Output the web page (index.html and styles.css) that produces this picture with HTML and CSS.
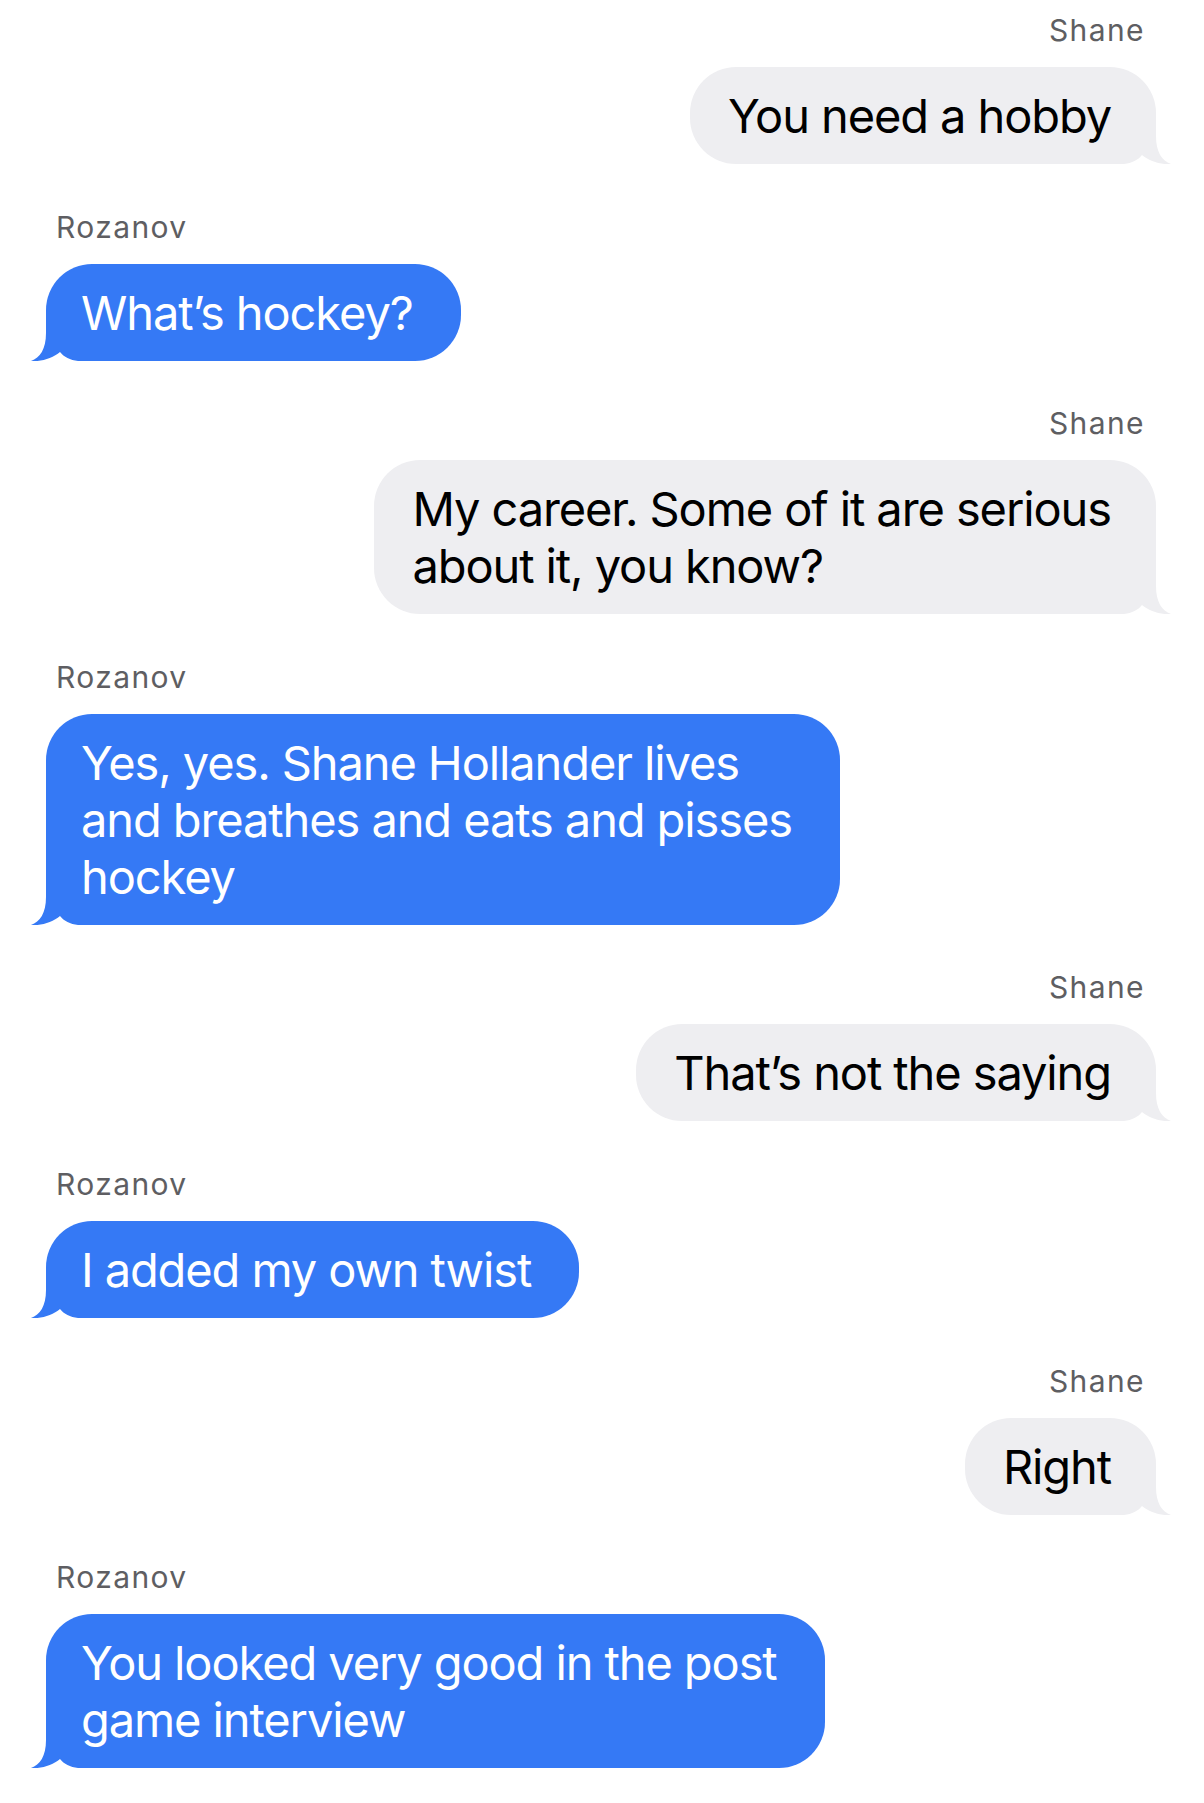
FILE: index.html
```html
<!DOCTYPE html>
<html lang="en">
<head>
<meta charset="utf-8">
<title>Messages</title>
<link rel="stylesheet" href="styles.css">
</head>
<body>
<main class="thread">
  <div class="msg msg--out">
    <div class="sender">Shane</div>
    <div class="bubble bubble--out">You need a hobby<svg class="tail" viewBox="-16 -50 64 50" width="64" height="50"><path d="M 0 -50 L 0 -28 C 0 -12 -6 -3 -15 0 C -5 1 7 -3 14 -9 C 18 -4 24 -1 32 0 L 48 0 L 48 -50 Z"/></svg></div>
  </div>
  <div class="msg msg--in">
    <div class="sender">Rozanov</div>
    <div class="bubble bubble--in">What’s hockey?<svg class="tail" viewBox="-16 -50 64 50" width="64" height="50"><path d="M 0 -50 L 0 -28 C 0 -12 -6 -3 -15 0 C -5 1 7 -3 14 -9 C 18 -4 24 -1 32 0 L 48 0 L 48 -50 Z"/></svg></div>
  </div>
  <div class="msg msg--out">
    <div class="sender">Shane</div>
    <div class="bubble bubble--out">My career. Some of it are serious<br>about it, you know?<svg class="tail" viewBox="-16 -50 64 50" width="64" height="50"><path d="M 0 -50 L 0 -28 C 0 -12 -6 -3 -15 0 C -5 1 7 -3 14 -9 C 18 -4 24 -1 32 0 L 48 0 L 48 -50 Z"/></svg></div>
  </div>
  <div class="msg msg--in">
    <div class="sender">Rozanov</div>
    <div class="bubble bubble--in">Yes, yes. Shane Hollander lives<br>and breathes and eats and pisses<br>hockey<svg class="tail" viewBox="-16 -50 64 50" width="64" height="50"><path d="M 0 -50 L 0 -28 C 0 -12 -6 -3 -15 0 C -5 1 7 -3 14 -9 C 18 -4 24 -1 32 0 L 48 0 L 48 -50 Z"/></svg></div>
  </div>
  <div class="msg msg--out">
    <div class="sender">Shane</div>
    <div class="bubble bubble--out">That’s not the saying<svg class="tail" viewBox="-16 -50 64 50" width="64" height="50"><path d="M 0 -50 L 0 -28 C 0 -12 -6 -3 -15 0 C -5 1 7 -3 14 -9 C 18 -4 24 -1 32 0 L 48 0 L 48 -50 Z"/></svg></div>
  </div>
  <div class="msg msg--in">
    <div class="sender">Rozanov</div>
    <div class="bubble bubble--in">I added my own twist<svg class="tail" viewBox="-16 -50 64 50" width="64" height="50"><path d="M 0 -50 L 0 -28 C 0 -12 -6 -3 -15 0 C -5 1 7 -3 14 -9 C 18 -4 24 -1 32 0 L 48 0 L 48 -50 Z"/></svg></div>
  </div>
  <div class="msg msg--out">
    <div class="sender">Shane</div>
    <div class="bubble bubble--out">Right<svg class="tail" viewBox="-16 -50 64 50" width="64" height="50"><path d="M 0 -50 L 0 -28 C 0 -12 -6 -3 -15 0 C -5 1 7 -3 14 -9 C 18 -4 24 -1 32 0 L 48 0 L 48 -50 Z"/></svg></div>
  </div>
  <div class="msg msg--in">
    <div class="sender">Rozanov</div>
    <div class="bubble bubble--in">You looked very good in the post<br>game interview<svg class="tail" viewBox="-16 -50 64 50" width="64" height="50"><path d="M 0 -50 L 0 -28 C 0 -12 -6 -3 -15 0 C -5 1 7 -3 14 -9 C 18 -4 24 -1 32 0 L 48 0 L 48 -50 Z"/></svg></div>
  </div>
</main>
</body>
</html>
```

FILE: styles.css
```css
html, body {
  margin: 0;
  padding: 0;
  background: #ffffff;
}

body {
  font-family: Inter, "Noto Sans", "Liberation Sans", sans-serif;
}

.thread {
  display: flex;
  flex-direction: column;
  gap: 45.6px;
  padding: 13px 48px 0 46px;
}

.msg {
  display: flex;
  flex-direction: column;
  gap: 20px;
}

.msg--out {
  align-items: flex-end;
}

.msg--in {
  align-items: flex-start;
}

.sender {
  font-size: 30px;
  line-height: 34px;
  color: #5e5e62;
  letter-spacing: 1.4px;
}

.msg--out .sender {
  padding-right: 11px;
}

.msg--in .sender {
  padding-left: 10px;
}

.bubble {
  position: relative;
  z-index: 0;
  font-size: 47px;
  line-height: 57px;
  letter-spacing: -1.1px;
  padding: 20px;
  border-radius: 46px;
  white-space: nowrap;
}

.bubble--out {
  background: #eeeef1;
  color: #000000;
  padding-left: 38px;
  padding-right: 45px;
}

.bubble--in {
  background: #3579f5;
  color: #ffffff;
  padding-left: 35px;
  padding-right: 48px;
}

.tail {
  position: absolute;
  z-index: -1;
  bottom: 0;
  display: block;
}

.bubble--in .tail {
  left: -16px;
  fill: #3579f5;
}

.bubble--out .tail {
  right: -16px;
  transform: scaleX(-1);
  fill: #eeeef1;
}
```
